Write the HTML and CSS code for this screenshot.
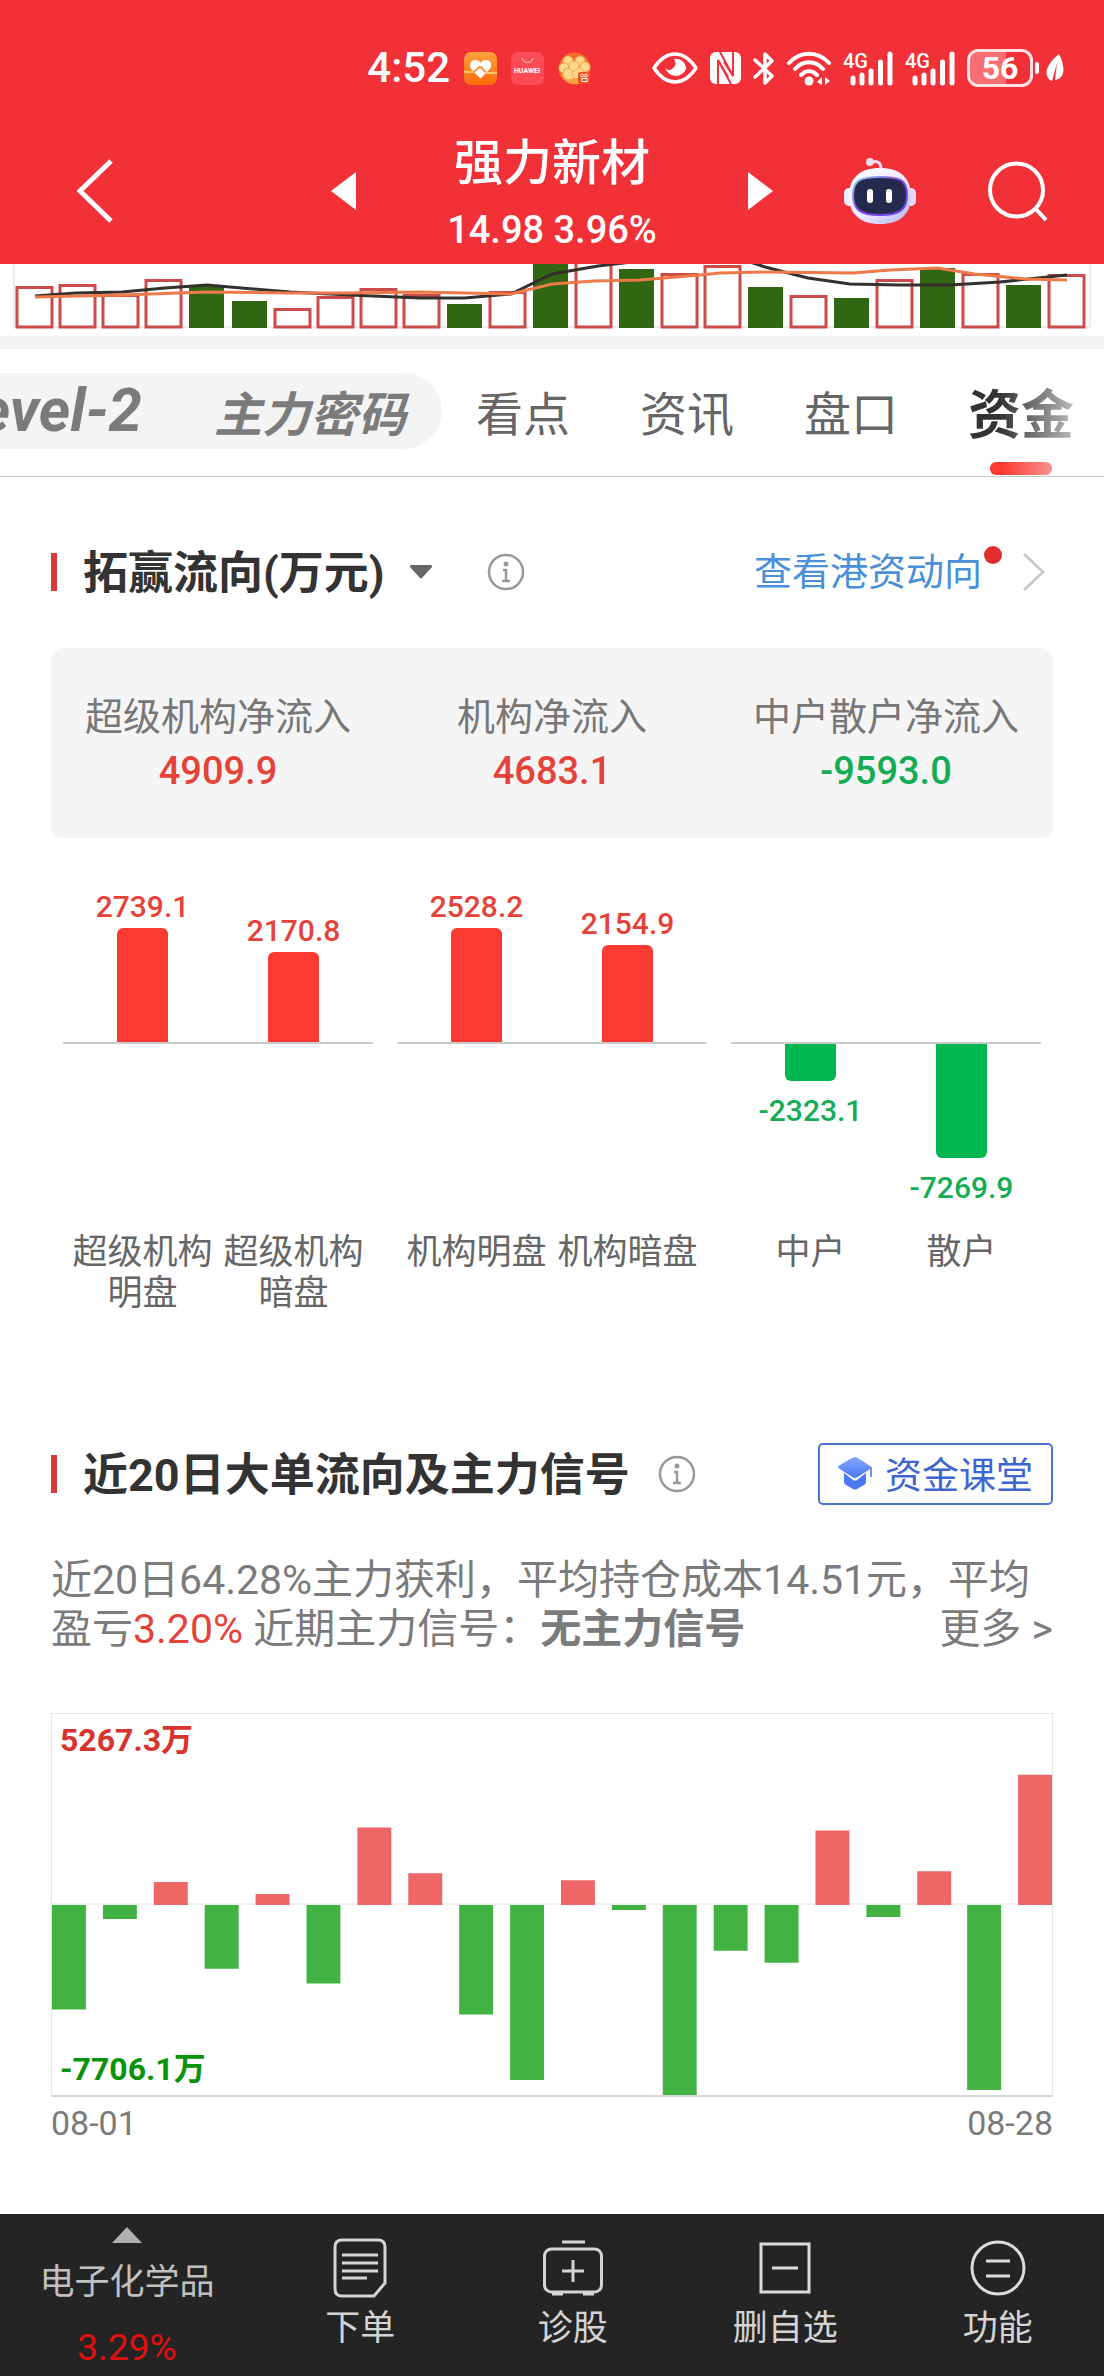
FILE: index.html
```html
<!DOCTYPE html>
<html lang="zh-CN">
<head>
    <meta charset="UTF-8">
    <meta name="viewport" content="width=device-width, initial-scale=1.0">
    <title>强力新材</title>
    <link rel="stylesheet" href="styles.css">
</head>
<body>
    <header class="top">
        <div class="status-bar">
            <div class="status-left">
                <span class="time">4:52</span>
                <svg width="33" height="33" viewBox="0 0 33 33">
                    <defs><linearGradient id="health" x1="0" y1="0" x2="0" y2="1"><stop offset="0" stop-color="#ffa23e"/><stop offset="1" stop-color="#ff6a0c"/></linearGradient></defs>
                    <rect width="33" height="33" rx="7" fill="url(#health)"/>
                    <path d="M0 20h9c3 0 3-4 7-5s4 6 8 6h9" fill="none" stroke="#ffc56f" stroke-width="2"/>
                    <path d="M16.500 26.500L8 18C4 13 7 8 11 8c3 0 4 1 5.500 3C18 9 19 8 22 8c5 0 7 5 3 10z" fill="#fff"/>
                    <path d="M9 20c3 0 4-5 7-5s3 4 6 5" fill="none" stroke="#ff9030" stroke-width="2"/>
                </svg>
                <svg width="33" height="33" viewBox="0 0 33 33">
                    <rect width="33" height="33" rx="7" fill="#ff4a57"/>
                    <path d="M11 6c1 6 10 6 11 0" fill="none" stroke="#ffd0d2" stroke-width="1"/>
                    <text class="huawei" x="16" y="21" text-anchor="middle">HUAWEI</text>
                </svg>
                <svg width="33" height="33" viewBox="0 0 33 33">
                    <circle cx="16.500" cy="16.500" r="16" fill="#f36b2b"/>
                    <path d="M3 22a16 16 0 0 0 18 10l5-10z" fill="#f7a13c"/>
                    <g fill="#fbd88c" stroke="#efa850"><circle cx="10" cy="9" r="5"/><circle cx="22" cy="9" r="5"/><circle cx="6" cy="16" r="5"/><circle cx="27" cy="15" r="5"/><circle cx="11" cy="22" r="6"/><circle cx="20" cy="21" r="6"/><circle cx="16" cy="14" r="5"/></g>
                    <rect x="20" y="20" width="12" height="12" rx="2" fill="#f2511b"/>
                    <g fill="none" stroke="#fff"><circle cx="24" cy="23.500" r="1.500"/><circle cx="28" cy="23.500" r="1.500"/><rect x="24" y="26.500" width="5" height="3"/></g>
                </svg>
            </div>
            <div class="status-right">
                <svg width="46" height="32" viewBox="0 0 46 32">
                    <path d="M2 16C8 7 15 2 23 2s15 5 21 14c-6 9-13 14-21 14S8 25 2 16z" fill="none" stroke="#fff" stroke-width="3.500" stroke-linejoin="round"/>
                    <path d="M22 7c7-1 12 4 12 10a11 11 0 0 1-21-2c1 3 4 4 7 2 3-2 5-6 2-10z" fill="#fff"/>
                </svg>
                <svg width="31" height="32" viewBox="0 0 31 32">
                    <rect width="31" height="32" rx="6" fill="#fff"/>
                    <path d="M8 32V8l13 24M23 0v24L10 0M14 10l9 14M8 8l10 17" fill="none" stroke="#f23038" stroke-width="2"/>
                </svg>
                <svg width="22" height="35" viewBox="0 0 22 35">
                    <path d="M2 9l17 16-7 7V3l7 7L2 26" fill="none" stroke="#fff" stroke-width="3.500" stroke-linecap="round" stroke-linejoin="round"/>
                </svg>
                <svg width="44" height="35" viewBox="0 0 44 35">
                    <g fill="none" stroke="#fff" stroke-width="4" stroke-linecap="round"><path d="M2 12C13-.5 31-.5 42 12"/><path d="M8 18c8-9 20-9 28 0"/><path d="M14 24c5-5 11-5 16 0"/></g>
                    <circle cx="22" cy="30" r="4.500" fill="#fff"/>
                    <path d="M35 26v8l-5-3zM38 26v8l5-4z" fill="#fff"/>
                </svg>
                <svg width="50" height="35" viewBox="0 0 50 35">
                    <text class="net" x="0" y="17">4G</text>
                    <path d="M10 27v5M19 24v8M28 20v12M37.500 11v21M47 3v29" fill="none" stroke="#fff" stroke-width="5" stroke-linecap="round"/>
                </svg>
                <svg width="50" height="35" viewBox="0 0 50 35">
                    <text class="net" x="0" y="17">4G</text>
                    <path d="M10 27v5M19 24v8M28 20v12M37.500 11v21M47 3v29" fill="none" stroke="#fff" stroke-width="5" stroke-linecap="round"/>
                </svg>
                <svg width="73" height="38" viewBox="0 0 73 38">
                    <path d="M12 3h27v32H12a9 9 0 0 1-9-9V12a9 9 0 0 1 9-9z" fill="#f76f74"/>
                    <rect x="1.500" y="1.500" width="63" height="35" rx="10" fill="none" stroke="#ffe3e4" stroke-width="3"/>
                    <path d="M70 15v8" stroke="#fff" stroke-width="4" stroke-linecap="round"/>
                    <text class="battery" x="33" y="30" text-anchor="middle">56</text>
                </svg>
                <svg class="leaf" width="18" height="30" viewBox="0 0 18 30">
                    <path d="M13 1c6 12 7 24-4 26l2-17L6 28C-3 24-1 12 13 1z" fill="#fff"/>
                </svg>
            </div>
        </div>
        <nav class="nav">
            <div class="nav-left">
                <button class="icon-button" aria-label="返回">
                    <svg width="36" height="64" viewBox="0 0 36 64"><path d="M34 2L3 32l31 30" fill="none" stroke="#fff" stroke-width="5"/></svg>
                </button>
            </div>
            <div class="nav-center">
                <button class="icon-button" aria-label="上一只">
                    <svg width="25" height="38" viewBox="0 0 25 38"><path d="M25 0v38L0 19z" fill="#fff"/></svg>
                </button>
                <div class="stock">
                    <h1>强力新材</h1>
                    <p>14.98 3.96%</p>
                </div>
                <button class="icon-button" aria-label="下一只">
                    <svg width="25" height="38" viewBox="0 0 25 38"><path d="M0 0v38l25-19z" fill="#fff"/></svg>
                </button>
            </div>
            <div class="nav-right">
                <button class="icon-button" aria-label="智能助手">
                    <svg width="72" height="68" viewBox="0 0 72 68">
                        <defs>
                            <linearGradient id="shell" x1="0" y1="0" x2="1" y2="1"><stop offset="0" stop-color="#fff"/><stop offset="0.500" stop-color="#f1ecff"/><stop offset="1" stop-color="#b4b4f4"/></linearGradient>
                            <linearGradient id="rim" x1="0" y1="0" x2="1" y2="1"><stop offset="0" stop-color="#8fd8f0"/><stop offset="0.500" stop-color="#8a3fe0"/><stop offset="1" stop-color="#5a48e8"/></linearGradient>
                        </defs>
                        <path d="M28 5c6-2 9 1 9 8" fill="none" stroke="#f1dff2" stroke-width="3"/>
                        <circle cx="26" cy="5" r="4" fill="#f4dcec"/>
                        <rect x="0" y="31" width="12" height="18" rx="5" fill="#f1ecff"/>
                        <rect x="60" y="31" width="12" height="18" rx="5" fill="#e6dcff"/>
                        <path d="M36 11c20 0 31 10 31 28S56 67 36 67 5 57 5 39s11-28 31-28z" fill="url(#shell)"/>
                        <path d="M36 20c20 0 27 3 27 18s-8 20-27 20S9 53 9 38s7-18 27-18z" fill="#242a4d" stroke="url(#rim)" stroke-width="2"/>
                        <rect x="23" y="32" width="6" height="14" rx="3" fill="#fff"/>
                        <rect x="42" y="32" width="6" height="14" rx="3" fill="#fff"/>
                    </svg>
                </button>
                <button class="icon-button" aria-label="搜索">
                    <svg width="60" height="60" viewBox="0 0 60 60"><circle cx="28.500" cy="29" r="26.500" fill="none" stroke="#fff" stroke-width="4"/><path d="M47 47l11 12" stroke="#fff" stroke-width="4"/></svg>
                </button>
            </div>
        </nav>
    </header>

    <svg class="volume" viewBox="0 0 1104 72" preserveAspectRatio="none">
        <path d="M14 0v63h1076V0" fill="none" stroke="#ececec" stroke-width="2"/>
        <g fill="#fff" stroke="#cb4b4b" stroke-width="3">
            <path d="M17 23.500h35V63H17zM60 21.500h35V63H60zM103 31.500h35V63h-35zM146 16.500h35V63h-35zM275 45.500h35V63h-35zM318 33.500h35V63h-35zM361 25.500h35V63h-35zM404 31.500h35V63h-35zM490 28.500h35V63h-35zM576-5h35v68h-35zM662 10.500h35V63h-35zM705 2.500h35V63h-35zM791 32.500h35V63h-35zM877 16.500h35V63h-35zM963 10.500h35V63h-35zM1049 11.500h35V63h-35z"/>
        </g>
        <path fill="#316613" d="M189 21h35v43h-35zM232 37h35v27h-35zM447 40h35v24h-35zM533 0h35v64h-35zM619 5h35v59h-35zM748 23h35v41h-35zM834 34h35v30h-35zM920 4h35v60h-35zM1006 21h35v43h-35z"/>
        <path d="M35 32L76 29L122 28L165 24L207 21L290 28L350 31L420 34L465 34L511 30L552 10L598 2L632 -2M750 -2L765 3L808 14L850 20L900 21L950 21L1000 18L1067 11" fill="none" stroke="#33302d" stroke-width="3"/>
        <path d="M35 33L122 31L207 28L290 29L350 29L420 28L511 30L552 20L594 17L640 16L700 11L720 9L765 8L853 9L890 6L937 4L975 10L1025 15L1067 16" fill="none" stroke="#ee7949" stroke-width="3"/>
    </svg>

    <nav class="tabs">
        <div class="tab-pill">
            <a href="#" class="level">Level-2</a>
            <a href="#">主力密码</a>
        </div>
        <a href="#" class="tab">看点</a>
        <a href="#" class="tab">资讯</a>
        <a href="#" class="tab">盘口</a>
        <a href="#" class="tab active"><span>资金</span></a>
    </nav>

    <main>
        <section class="flow">
            <div class="section-head">
                <h2>拓赢流向(万元)</h2>
                <button class="caret" aria-label="切换单位">
                    <svg width="24" height="14" viewBox="0 0 24 14"><path d="M2 0h20q2 1 1 2L13 13q-1 1-2 0L1 2Q0 1 2 0z" fill="#666"/></svg>
                </button>
                <button class="info" aria-label="说明">
                    <svg width="38" height="38" viewBox="0 0 38 38"><circle cx="19" cy="19" r="17" fill="none" stroke="#999" stroke-width="2.500"/><circle cx="19" cy="11" r="2.500" fill="#999"/><path d="M16 17h3v11M15 28h8" fill="none" stroke="#999" stroke-width="2.500"/></svg>
                </button>
                <a href="#" class="hk-link">
                    查看港资动向<i class="dot"></i>
                    <svg width="24" height="38" viewBox="0 0 24 38"><path d="M2 1l19 18L2 37" fill="none" stroke="#ccc" stroke-width="3"/></svg>
                </a>
            </div>

            <dl class="summary">
                <div><dt>超级机构净流入</dt><dd class="up">4909.9</dd></div>
                <div><dt>机构净流入</dt><dd class="up">4683.1</dd></div>
                <div><dt>中户散户净流入</dt><dd class="down">-9593.0</dd></div>
            </dl>

            <div class="flow-chart">
                <div class="group">
                    <div class="plus">
                        <div class="col up">2739.1<i class="bar" style="height: 114px"></i></div>
                        <div class="col up">2170.8<i class="bar" style="height: 90px"></i></div>
                    </div>
                    <div class="minus"></div>
                    <div class="names"><span>超级机构明盘</span><span>超级机构暗盘</span></div>
                </div>
                <div class="group">
                    <div class="plus">
                        <div class="col up">2528.2<i class="bar" style="height: 114px"></i></div>
                        <div class="col up">2154.9<i class="bar" style="height: 97px"></i></div>
                    </div>
                    <div class="minus"></div>
                    <div class="names"><span>机构明盘</span><span>机构暗盘</span></div>
                </div>
                <div class="group">
                    <div class="plus"></div>
                    <div class="minus">
                        <div class="col down"><i class="bar" style="height: 37px"></i>-2323.1</div>
                        <div class="col down"><i class="bar" style="height: 114px"></i>-7269.9</div>
                    </div>
                    <div class="names"><span>中户</span><span>散户</span></div>
                </div>
            </div>
        </section>

        <section class="signal">
            <div class="section-head">
                <h2>近20日大单流向及主力信号</h2>
                <button class="info" aria-label="说明">
                    <svg width="38" height="38" viewBox="0 0 38 38"><circle cx="19" cy="19" r="17" fill="none" stroke="#999" stroke-width="2.500"/><circle cx="19" cy="11" r="2.500" fill="#999"/><path d="M16 17h3v11M15 28h8" fill="none" stroke="#999" stroke-width="2.500"/></svg>
                </button>
                <button class="course">
                    <svg width="36" height="34" viewBox="0 0 36 34">
                        <defs><linearGradient id="cap" x1="0" y1="0" x2="0" y2="1"><stop offset="0" stop-color="#86a9fb"/><stop offset="1" stop-color="#4b78f5"/></linearGradient></defs>
                        <path d="M7 17l9 7q2 1 4 0l9-7v9q0 2-2 3l-7 4q-2 1-4 0l-7-4q-2-1-2-3z" fill="#4b78f5"/>
                        <path d="M16 1q2-1 4 0l14 9q2 1 0 3l-14 9q-2 1-4 0L2 13q-3-2 0-4z" fill="url(#cap)" stroke="#fff" stroke-width="1"/>
                        <path d="M34 11v10" stroke="#6f95f8" stroke-width="2"/>
                    </svg>
                    资金课堂
                </button>
            </div>

            <p class="advice">
                近20日64.28%主力获利，平均持仓成本14.51元，平均盈亏<span class="up">3.20%</span> 近期主力信号：<b>无主力信号</b>
                <a href="#" class="more">更多 &gt;</a>
            </p>

            <div class="history">
                <svg viewBox="0 0 1002 383" preserveAspectRatio="none">
                    <path d="M0 191h1002" stroke="#f0f0f0" stroke-width="2"/>
                    <path fill="#ee6666" d="M102 169h34v23h-34zM204 181h34v11h-34zM306 114h34v78h-34zM357 160h34v32h-34zM510 167h34v25h-34zM765 117h34v75h-34zM867 158h34v34h-34zM968 61h34v131h-34z"/>
                    <path fill="#42b342" d="M0 192h34v105H0zM51 192h34v14H51zM153 192h34v64h-34zM255 192h34v79h-34zM408 192h34v110h-34zM459 192h34v176h-34zM561 192h34v5h-34zM612 192h34v191h-34zM663 192h34v46h-34zM714 192h34v58h-34zM816 192h34v12h-34zM917 192h34v186h-34z"/>
                </svg>
                <span class="max">5267.3万</span>
                <span class="min">-7706.1万</span>
            </div>
            <div class="dates"><span>08-01</span><span>08-28</span></div>
        </section>
    </main>

    <footer class="bottom-bar">
        <a href="#" class="sector">
            <svg width="30" height="16" viewBox="0 0 30 16"><path d="M15 0l15 16H0z" fill="#b0b0b0"/></svg>
            <span>电子化学品</span>
            <span class="rate">3.29%</span>
        </a>
        <button class="action">
            <svg width="60" height="60" viewBox="0 0 60 60" fill="none" stroke="#d4d4d4" stroke-width="3"><path d="M12 2h36q7 0 7 7v36L44 58H12q-7 0-7-7V9q0-7 7-7zM12 17h36M12 25h36M12 33h36M12 40h25"/></svg>
            下单
        </button>
        <button class="action">
            <svg width="60" height="60" viewBox="0 0 60 60" fill="none" stroke="#d4d4d4" stroke-width="3"><rect x="1.500" y="11" width="57" height="43" rx="7"/><path d="M19 4h23M30 22v22M19 33h22M9 56h11M40 56h11"/></svg>
            诊股
        </button>
        <button class="action">
            <svg width="60" height="60" viewBox="0 0 60 60" fill="none" stroke="#dcdcdc" stroke-width="3"><path d="M6 6h48v48H6zM17 30h26"/></svg>
            删自选
        </button>
        <button class="action">
            <svg width="60" height="60" viewBox="0 0 60 60" fill="none" stroke="#dcdcdc" stroke-width="3"><circle cx="30" cy="30" r="26"/><path d="M18 23h24M18 38h24"/></svg>
            功能
        </button>
    </footer>
</body>
</html>
```

FILE: styles.css
```css
* {
    box-sizing: border-box;
}
body {
    margin: 0;
    min-height: 100vh;
    display: flex;
    flex-direction: column;
    background: #fff;
    color: #666;
    font-family: Roboto, "Noto Sans CJK SC", sans-serif;
    overflow-x: hidden;
}
h1, h2, p, dl, dd {
    margin: 0;
}
a {
    color: inherit;
    text-decoration: none;
}
button {
    padding: 0;
    border: none;
    background: none;
    color: inherit;
    font: inherit;
    cursor: pointer;
}
svg {
    display: block;
    flex-shrink: 0;
}
.up {
    color: #e5433a;
}
.down {
    color: #14ad55;
}

/* header */
.top {
    background: #f23038;
    color: #fff;
}
.status-bar {
    display: flex;
    justify-content: flex-end;
    gap: 61px;
    height: 130px;
    padding: 50px 40px 44px;
}
.status-left,
.status-right {
    display: flex;
    align-items: center;
    gap: 12px;
}
.time {
    font-size: 42px;
    line-height: 36px;
    font-weight: 500;
}
.status-left {
    gap: 14px;
}
.huawei {
    font-size: 7px;
    font-weight: 700;
    fill: #fff;
}
.net {
    font-size: 20px;
    font-weight: 500;
    fill: #fff;
}
.battery {
    font-size: 32px;
    font-weight: 700;
    fill: #fff;
}
.leaf {
    margin-left: -6px;
}
.nav {
    display: grid;
    grid-template-columns: 1fr 40% 1fr;
    align-items: center;
    height: 134px;
}
.icon-button {
    padding-bottom: 12px;
}
.nav-left {
    padding-left: 77px;
}
.nav-center {
    display: flex;
    align-items: center;
    justify-content: space-between;
}
.nav-right {
    display: flex;
    align-items: center;
    justify-content: flex-end;
    gap: 72px;
    padding-right: 56px;
}
.stock {
    text-align: center;
}
.stock h1 {
    font-size: 49px;
    line-height: 66px;
    font-weight: 500;
}
.stock p {
    font-size: 38px;
    line-height: 66px;
    font-weight: 500;
}

/* volume strip */
.volume {
    width: 100%;
    height: 72px;
}

/* tabs */
.tabs {
    display: flex;
    align-items: center;
    justify-content: flex-end;
    gap: 70px;
    height: 141px;
    padding: 0 30px 4px 0;
    border-top: 13px solid #f4f4f4;
    border-bottom: 1px solid #c8c8c8;
    overflow: hidden;
    font-size: 47px;
    white-space: nowrap;
}
.tab-pill {
    display: flex;
    align-items: center;
    gap: 72px;
    height: 76px;
    margin-right: -36px;
    padding: 0 36px;
    border-radius: 38px;
    background: #f4f4f4;
    color: #7b7b7b;
    font-size: 48px;
    font-weight: 700;
    font-style: italic;
}
.level {
    font-size: 60px;
}
.active {
    position: relative;
    font-size: 53px;
    font-weight: 700;
}
.active span {
    background: linear-gradient(90deg, #333 30%, #bbb);
    -webkit-background-clip: text;
    background-clip: text;
    color: transparent;
}
.active::after {
    content: "";
    position: absolute;
    right: 22px;
    bottom: -26px;
    width: 62px;
    height: 13px;
    border-radius: 6px;
    background: linear-gradient(90deg, #fb3b33 20%, #f9938e);
}

/* sections */
main {
    padding: 64px 51px 0;
}
.section-head {
    display: flex;
    align-items: center;
    height: 62px;
}
.section-head::before {
    content: "";
    width: 6px;
    height: 38px;
    margin-right: 26px;
    background: #d83a3a;
}
.section-head h2 {
    padding-top: 4px;
    color: #333;
    font-size: 45px;
    line-height: 62px;
    font-weight: 700;
}
.caret {
    margin: 0 26px 0 24px;
}
.info {
    margin-left: 28px;
}
.hk-link {
    display: flex;
    align-items: center;
    height: 56px;
    margin-left: auto;
    padding-right: 7px;
    color: #4a90d9;
    font-size: 38px;
    line-height: 50px;
}
.dot {
    width: 18px;
    height: 18px;
    margin: 0 20px 34px 2px;
    border-radius: 50%;
    background: #e02e2e;
}
.summary {
    display: grid;
    grid-template-columns: repeat(3, 1fr);
    margin-top: 45px;
    padding: 42px 0 40px;
    border-radius: 12px;
    background: #f5f5f5;
    text-align: center;
    font-size: 38px;
    line-height: 54px;
}
.summary dt {
    color: #777;
}
.summary dd {
    font-weight: 500;
}

/* fund flow bars */
.flow-chart {
    display: grid;
    grid-template-columns: repeat(3, 1fr);
    gap: 24px;
    margin-top: 52px;
    padding: 0 12px;
}
.plus,
.minus,
.names {
    display: grid;
    grid-template-columns: 1fr 1fr;
    padding: 0 4px;
}
.plus {
    height: 154px;
    border-bottom: 2px solid #ccc;
}
.minus {
    height: 188px;
}
.col {
    display: flex;
    flex-direction: column;
    align-items: center;
    gap: 5px;
    font-size: 30px;
    line-height: 32px;
    font-weight: 500;
}
.plus .col {
    justify-content: flex-end;
}
.minus .col {
    gap: 14px;
}
.bar {
    width: 51px;
}
.plus .bar {
    border-radius: 6px 6px 0 0;
    background: #fb3b33;
}
.minus .bar {
    border-radius: 0 0 6px 6px;
    background: #00b750;
}
.names {
    font-size: 35px;
    line-height: 41px;
    text-align: center;
}

/* 20 day signal */
.signal {
    margin-top: 129px;
}
.course {
    display: flex;
    align-items: center;
    gap: 12px;
    height: 62px;
    margin-left: auto;
    padding: 0 18px 2px 17px;
    border: 2px solid #4a72d0;
    border-radius: 5px;
    color: #3f66d0;
    font-size: 37px;
}
.advice {
    margin-top: 51px;
    color: #7b7b7b;
    font-size: 41px;
    line-height: 49px;
}
.more {
    float: right;
}
.history {
    position: relative;
    margin-top: 59px;
    border: 1px solid #e8e8e8;
    border-bottom: 2px solid #d8d8d8;
}
.history svg {
    width: 100%;
    height: 381px;
}
.max,
.min {
    position: absolute;
    left: 8px;
    font-size: 32px;
    line-height: 40px;
    font-weight: 700;
}
.max {
    top: 6px;
    color: #d8332f;
}
.min {
    bottom: 6px;
    color: #0a930a;
}
.dates {
    display: flex;
    justify-content: space-between;
    margin-top: 6px;
    color: #7b7b7b;
    font-size: 34px;
    line-height: 40px;
}

/* bottom bar */
.bottom-bar {
    display: grid;
    grid-template-columns: 23% repeat(4, 1fr);
    height: 162px;
    margin-top: auto;
    background: #242424;
    color: #d4d4d4;
    font-size: 35px;
}
.sector {
    display: flex;
    flex-direction: column;
    align-items: center;
    padding-top: 13px;
    color: #c0c0c0;
}
.sector span {
    margin-top: 15px;
    line-height: 50px;
}
.sector .rate {
    color: #e01010;
    font-size: 37px;
}
.action {
    display: flex;
    flex-direction: column;
    align-items: center;
    gap: 6px;
    padding-top: 24px;
    line-height: 50px;
}
```
